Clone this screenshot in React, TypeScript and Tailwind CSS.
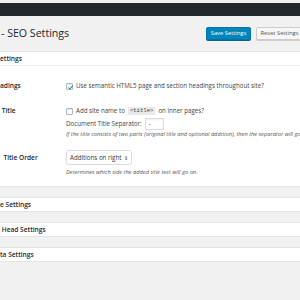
import React from 'react';

const Check = ({ checked }: { checked?: boolean }) => (
  <span className="relative inline-flex w-[7px] h-[7px] shrink-0 items-center justify-center border border-[#b4b9be] bg-white rounded-[1px] shadow-[inset_0_1px_1px_rgba(0,0,0,0.1)]">
    {checked && (
      <svg viewBox="0 0 10 10" className="absolute w-[7px] h-[7px] top-0 left-0">
        <path d="M1.8 5 L4 7.2 L8.2 2.2" fill="none" stroke="#1e8cbe" strokeWidth="1.5" />
      </svg>
    )}
  </span>
);

const Box = ({ title }: { title: string }) => (
  <div className="h-[15px] bg-white border-y border-[#e5e5e5] flex items-center text-[6.6px] font-semibold text-[#23282d] whitespace-pre">
    {title}
  </div>
);

export default function App() {
  return (
    <div className="w-[300px] h-[300px] overflow-hidden bg-[#f1f1f1] font-['Open_Sans',sans-serif] text-[#444]">
      <div className="h-[3px]" />
      <div className="h-[13px] bg-[#23282d]" />

      {/* title + actions */}
      <div className="h-[35px] flex items-center justify-between">
        <h1 className="text-[10.6px] text-[#23282d] pl-[1px] leading-none">- SEO Settings</h1>
        <div className="flex items-center gap-[5px] mr-[-3px]">
          <button className="h-[13px] w-[45px] bg-[#0085ba] border border-[#0073aa] rounded-[2px] text-white text-[5.8px] leading-none shadow-[0_1px_0_#006799]">
            Save Settings
          </button>
          <button className="h-[13px] w-[47px] bg-[#f7f7f7] border border-[#ccc] rounded-[2px] text-[#555] text-[5.8px] leading-none shadow-[0_1px_0_#ccc]">
            Reset Settings
          </button>
        </div>
      </div>

      {/* main box */}
      <div className="bg-white border-y border-[#e5e5e5]">
        <div className="h-[14px] flex items-center border-b border-[#eee] text-[6.6px] font-semibold text-[#23282d]">
          ettings
        </div>
        <div className="pt-[16px] pb-[10px] text-[6.2px] leading-[8px]">
          <div className="flex">
            <div className="w-[66px] shrink-0 font-semibold text-[#23282d] text-[6.6px]">adings</div>
            <div className="flex items-center gap-[3px]">
              <Check checked />
              <span className="whitespace-nowrap">Use semantic HTML5 page and section headings throughout site?</span>
            </div>
          </div>

          <div className="flex mt-[17px]">
            <div className="w-[66px] shrink-0 font-semibold text-[#23282d] text-[6.6px] whitespace-pre"> Title</div>
            <div className="flex flex-col">
              <div className="flex items-center gap-[3px]">
                <Check />
                <span className="whitespace-nowrap">Add site name to</span>
                <code className="px-[2px] bg-[#eaeaea] font-['Liberation_Mono',monospace] text-[5.6px]">&lt;title&gt;</code>
                <span className="whitespace-nowrap">on inner pages?</span>
              </div>
              <div className="flex items-center gap-[3px] mt-[3px]">
                <span className="whitespace-nowrap">Document Title Separator:</span>
                <span className="w-[19px] h-[12px] border border-[#ddd] shadow-[inset_0_1px_2px_rgba(0,0,0,0.07)] pl-[3px] leading-[10px]">-</span>
              </div>
              <div className="w-[234px] overflow-hidden italic text-[5.7px] leading-[7px] whitespace-nowrap mt-[1px] text-[#555]">
                If the title consists of two parts (original title and optional addition), then the separator will go
              </div>
            </div>
          </div>

          <div className="flex mt-[12px]">
            <div className="w-[66px] shrink-0 font-semibold text-[#23282d] text-[6.6px] pt-[4px] whitespace-pre">  Title Order</div>
            <div className="flex flex-col">
              <div className="w-[66px] h-[15px] border border-[#ddd] rounded-[3px] flex items-center justify-between px-[3px] text-[#32373c]">
                <span>Additions on right</span>
                <span className="text-[5px]">⇕</span>
              </div>
              <div className="italic text-[5.7px] leading-[7px] whitespace-nowrap mt-[4px] text-[#555]">
                Determines which side the added title text will go on.
              </div>
            </div>
          </div>
        </div>
      </div>

      <div className="h-[10px]" />
      <Box title="e Settings" />
      <div className="h-[10px]" />
      <Box title=" Head Settings" />
      <div className="h-[10px]" />
      <Box title="ta Settings" />
    </div>
  );
}
